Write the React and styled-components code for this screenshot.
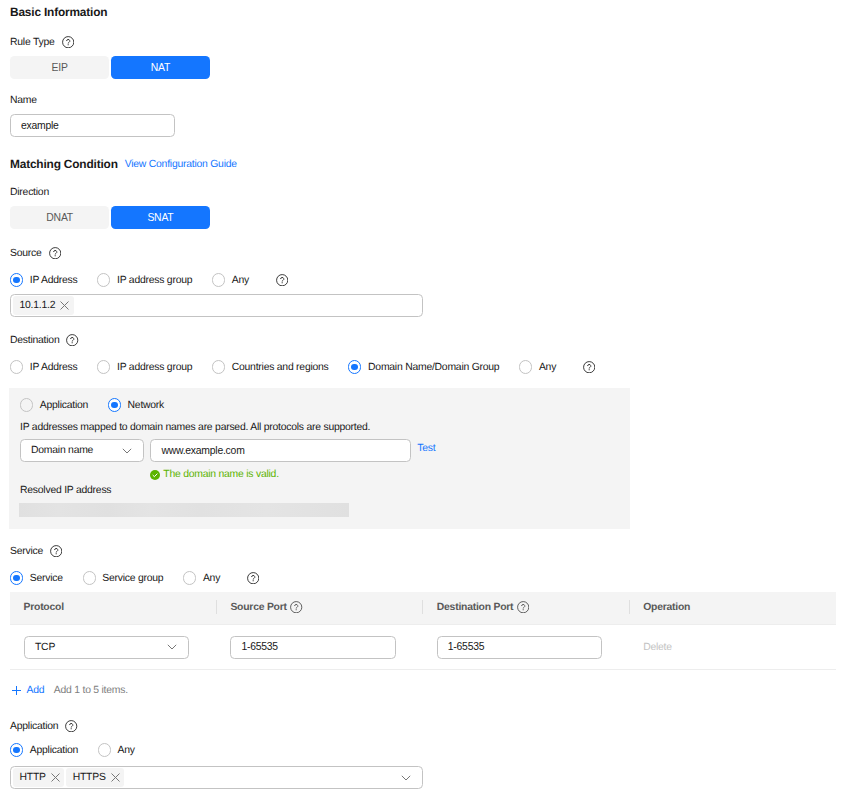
import React, { useState } from "react";
import styled, { createGlobalStyle } from "styled-components";

const GlobalStyle = createGlobalStyle`
    body {
        margin: 0;
        background: #fff;
        color: #191919;
        font-family: "Liberation Sans", Arial, sans-serif;
        font-size: 10.4px;
        letter-spacing: -0.23px;
        line-height: 17px;
        text-rendering: geometricPrecision;
    }

    * {
        box-sizing: border-box;
    }
`;

const Page = styled.main`
    width: 868px;
    height: 802px;
    padding: 4px 32px 0 10px;
    overflow: hidden;
`;

const Section = styled.section`
    margin-top: ${(p) => p.$top || 0}px;
`;

const Heading = styled.div`
    display: flex;
    align-items: center;
    gap: 7px;
    height: 16px;
`;

const Title = styled.h2`
    margin: 0;
    font-size: 11.9px;
    font-weight: bold;
    letter-spacing: -0.18px;
`;

const Link = styled.a`
    color: #1476ff;
    cursor: pointer;
`;

const Label = styled.div`
    display: flex;
    align-items: center;
    gap: 7px;
    height: 16px;
    margin-bottom: ${(p) => p.$bottom || 0}px;
`;

const Segments = styled.div`
    display: flex;
    gap: 1.5px;
`;

const Segment = styled.button`
    width: 99.3px;
    height: 23px;
    padding: 0;
    border: 0;
    border-radius: 4.5px;
    background: ${(p) => (p.$active ? "#1476ff" : "#f4f4f4")};
    color: ${(p) => (p.$active ? "#fff" : "#595959")};
    font: inherit;
    letter-spacing: inherit;
`;

const Field = styled.input`
    display: block;
    width: ${(p) => p.$width}px;
    height: 23px;
    padding: 0 10px 1px;
    border: 1px solid #c3c3c3;
    border-radius: 4.5px;
    background: #fff;
    color: #191919;
    font: inherit;
    letter-spacing: inherit;
    outline: none;
`;

const Picker = styled.div`
    display: flex;
    align-items: center;
    justify-content: space-between;
    width: ${(p) => p.$width}px;
    height: 23px;
    padding: 0 11.5px 0 10px;
    border: 1px solid #c3c3c3;
    border-radius: 4.5px;
    background: #fff;
`;

const TagBox = styled.div`
    display: flex;
    align-items: center;
    gap: 2px;
    width: 413px;
    height: 23px;
    padding: 0 11.5px 0 2px;
    border: 1px solid #c3c3c3;
    border-radius: 4.5px;

    > svg {
        margin-left: auto;
    }
`;

const TagItem = styled.span`
    display: flex;
    align-items: center;
    gap: 5px;
    height: 19px;
    padding: 0 4.5px 0 6.5px;
    border-radius: 3px;
    background: #f4f4f4;
`;

const Radios = styled.div`
    display: flex;
    align-items: center;
    gap: 19.7px;
    height: 16px;

    > svg {
        margin-left: 7px;
    }
`;

const RadioLabel = styled.label`
    display: flex;
    align-items: center;
    gap: 6.6px;
    white-space: nowrap;
`;

const Dot = styled.span`
    display: flex;
    align-items: center;
    justify-content: center;
    width: 13.2px;
    height: 13.2px;
    border: 1px solid ${(p) => (p.$checked ? "#1476ff" : "#c3c3c3")};
    border-radius: 50%;
    background: ${(p) => (p.$checked ? "#fff" : "transparent")};

    &::after {
        content: "";
        width: 6.8px;
        height: 6.8px;
        border-radius: 50%;
        background: ${(p) => (p.$checked ? "#1476ff" : "transparent")};
    }
`;

const Panel = styled.div`
    width: 621px;
    height: 141px;
    margin: 13px 0 0 -0.7px;
    padding: 9px 10.7px 0;
    background: #f4f4f4;
`;

const Hint = styled.div`
    height: 16px;
    margin-top: 6px;
`;

const DomainRow = styled.div`
    display: flex;
    gap: 6.4px;
    margin-top: 4px;

    ${Link} {
        padding-top: 1px;
    }
`;

const Valid = styled.div`
    display: flex;
    align-items: center;
    gap: 3px;
    height: 16px;
    margin-top: 4.5px;
    padding-left: 130.3px;
    color: #5cb300;
`;

const Resolved = styled.div`
    width: 330px;
    height: 14px;
    margin: 4.5px 0 0 -1px;
    background: linear-gradient(
        90deg,
        #e0e0e0,
        #e3e3e3 12%,
        #e0e0e0 27%,
        #e4e4e4 40%,
        #e1e1e1 55%,
        #e4e4e4 75%,
        #e0e0e0
    );
`;

const Table = styled.div`
    width: 826px;
    margin-top: 6px;
`;

const Row = styled.div`
    display: grid;
    grid-template-columns: repeat(4, 206.4px);
    align-items: center;
    height: 45px;
    border-bottom: 1px solid #ededed;
`;

const HeadRow = styled(Row)`
    height: 33px;
    padding-bottom: 2px;
    background: #f4f4f4;
    color: #595959;
    font-weight: bold;
`;

const HeadCell = styled.div`
    display: flex;
    align-items: center;
    gap: 3.5px;
    height: 14px;
    padding-left: 13.5px;

    & + & {
        border-left: 1px solid #dfdfdf;
        margin-left: -0.5px;
    }
`;

const Cell = styled.div`
    padding-left: 14px;
    color: ${(p) => (p.$disabled ? "#c3c3c3" : "#191919")};
`;

const AddRow = styled.div`
    display: flex;
    align-items: center;
    height: 16px;
    margin-top: 12px;
    padding-left: 2px;
    color: #808080;

    svg {
        margin-right: 5.5px;
    }

    ${Link} {
        margin-right: 9.5px;
    }
`;

const HelpIcon = ({ color = "#333" }) => (
    <svg width="12.4" height="12.4" viewBox="0 0 15 15" fill="none" stroke={color}>
        <circle cx="7.5" cy="7.5" r="6.8" strokeWidth="1.15" />
        <path
            d="M5.6 6.1a1.9 1.9 0 1 1 2.8 1.65c-.65.37-.9.65-.9 1.25"
            strokeWidth="1.2"
        />
        <path d="M7.5 9.9v1.3" strokeWidth="1.3" />
    </svg>
);

const ChevronIcon = () => (
    <svg width="10" height="6" viewBox="0 0 10 6" fill="none" stroke="#777">
        <path d="M.8.8 5 5 9.2.8" />
    </svg>
);

const CloseIcon = () => (
    <svg width="9" height="9" viewBox="0 0 9 9" fill="none" stroke="#777">
        <path d="m.5.5 8 8m0-8-8 8" />
    </svg>
);

const PlusIcon = () => (
    <svg width="9" height="9" viewBox="0 0 9 9" fill="none" stroke="#1476ff">
        <path d="M4.5 0v9M0 4.5h9" />
    </svg>
);

const ValidIcon = () => (
    <svg width="10" height="10" viewBox="0 0 10 10" fill="none">
        <circle cx="5" cy="5" r="5" fill="#5cb300" />
        <path d="m2.7 5 1.7 1.7 3-3.1" stroke="#fff" />
    </svg>
);

const Switcher = ({ options, initial }) => {
    const [active, setActive] = useState(initial);

    return (
        <Segments>
            {options.map((option) => (
                <Segment
                    key={option}
                    $active={option === active}
                    onClick={() => setActive(option)}
                >
                    {option}
                </Segment>
            ))}
        </Segments>
    );
};

const RadioGroup = ({ options, initial, help }) => {
    const [checked, setChecked] = useState(initial);

    return (
        <Radios>
            {options.map((option) => (
                <RadioLabel key={option} onClick={() => setChecked(option)}>
                    <Dot $checked={option === checked} />
                    {option}
                </RadioLabel>
            ))}
            {help && <HelpIcon />}
        </Radios>
    );
};

const Tag = ({ children }) => (
    <TagItem>
        {children}
        <CloseIcon />
    </TagItem>
);

const App = () => {
    return (
        <>
            <GlobalStyle />
            <Page>
                <Heading>
                    <Title>Basic Information</Title>
                </Heading>
                <Section $top={14}>
                    <Label $bottom={6}>
                        Rule Type <HelpIcon />
                    </Label>
                    <Switcher options={["EIP", "NAT"]} initial="NAT" />
                </Section>
                <Section $top={13}>
                    <Label $bottom={6}>Name</Label>
                    <Field $width={165} defaultValue="example" />
                </Section>

                <Section $top={19}>
                    <Heading>
                        <Title>Matching Condition</Title>
                        <Link>View Configuration Guide</Link>
                    </Heading>
                </Section>
                <Section $top={12}>
                    <Label $bottom={6}>Direction</Label>
                    <Switcher options={["DNAT", "SNAT"]} initial="SNAT" />
                </Section>
                <Section $top={16}>
                    <Label $bottom={11}>
                        Source <HelpIcon />
                    </Label>
                    <RadioGroup
                        options={["IP Address", "IP address group", "Any"]}
                        initial="IP Address"
                        help
                    />
                    <Section $top={6}>
                        <TagBox>
                            <Tag>10.1.1.2</Tag>
                        </TagBox>
                    </Section>
                </Section>
                <Section $top={15}>
                    <Label $bottom={11}>
                        Destination <HelpIcon />
                    </Label>
                    <RadioGroup
                        options={[
                            "IP Address",
                            "IP address group",
                            "Countries and regions",
                            "Domain Name/Domain Group",
                            "Any",
                        ]}
                        initial="Domain Name/Domain Group"
                        help
                    />
                    <Panel>
                        <RadioGroup
                            options={["Application", "Network"]}
                            initial="Network"
                        />
                        <Hint>
                            IP addresses mapped to domain names are parsed. All
                            protocols are supported.
                        </Hint>
                        <DomainRow>
                            <Picker $width={124}>
                                Domain name <ChevronIcon />
                            </Picker>
                            <Field $width={260.5} defaultValue="www.example.com" />
                            <Link>Test</Link>
                        </DomainRow>
                        <Valid>
                            <ValidIcon />
                            The domain name is valid.
                        </Valid>
                        <Label>Resolved IP address</Label>
                        <Resolved />
                    </Panel>
                </Section>
                <Section $top={14}>
                    <Label $bottom={11}>
                        Service <HelpIcon />
                    </Label>
                    <RadioGroup
                        options={["Service", "Service group", "Any"]}
                        initial="Service"
                        help
                    />
                    <Table>
                        <HeadRow>
                            <HeadCell>Protocol</HeadCell>
                            <HeadCell>
                                Source Port <HelpIcon color="#595959" />
                            </HeadCell>
                            <HeadCell>
                                Destination Port <HelpIcon color="#595959" />
                            </HeadCell>
                            <HeadCell>Operation</HeadCell>
                        </HeadRow>
                        <Row>
                            <Cell>
                                <Picker $width={165}>
                                    TCP <ChevronIcon />
                                </Picker>
                            </Cell>
                            <Cell>
                                <Field $width={165.5} defaultValue="1-65535" />
                            </Cell>
                            <Cell>
                                <Field $width={165.5} defaultValue="1-65535" />
                            </Cell>
                            <Cell $disabled>Delete</Cell>
                        </Row>
                    </Table>
                    <AddRow>
                        <PlusIcon />
                        <Link>Add</Link>
                        Add 1 to 5 items.
                    </AddRow>
                </Section>
                <Section $top={20}>
                    <Label $bottom={8}>
                        Application <HelpIcon />
                    </Label>
                    <RadioGroup
                        options={["Application", "Any"]}
                        initial="Application"
                    />
                    <Section $top={8}>
                        <TagBox>
                            <Tag>HTTP</Tag>
                            <Tag>HTTPS</Tag>
                            <ChevronIcon />
                        </TagBox>
                    </Section>
                </Section>
            </Page>
        </>
    );
};

export default App;
